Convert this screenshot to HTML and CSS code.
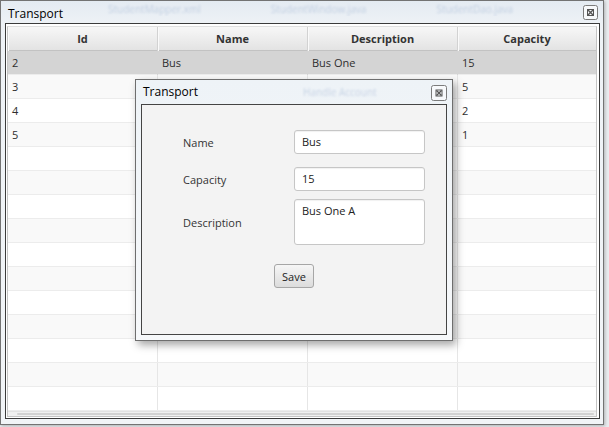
FILE: index.html
```html
<!DOCTYPE html>
<html>
<head>
<meta charset="utf-8">
<link rel="stylesheet" href="styles.css">
</head>
<body>
<div class="window">
  <div class="titlebar">
    <span class="title">Transport</span>
    <div class="ghosts">
      <span class="ghost">StudentMapper.xml</span>
      <span class="ghost">StudentWindow.java</span>
      <span class="ghost">StudentDao.java</span>
    </div>
    <span class="close">
      <svg width="15" height="15" viewBox="0 0 15 15"><rect x="0.5" y="0.5" width="14" height="14" rx="2" fill="#f7f9fb" stroke="#7b7b7b"/><rect x="4.5" y="4.5" width="6" height="6" fill="none" stroke="#555"/><path d="M5 5 L10 10 M10 5 L5 10" stroke="#555" stroke-width="1.4"/></svg>
    </span>
  </div>
  <div class="client">
    <div class="table">
      <div class="row header">
        <div class="cell">Id</div>
        <div class="cell">Name</div>
        <div class="cell">Description</div>
        <div class="cell">Capacity</div>
      </div>
      <div class="rows">
        <div class="row selected"><div class="cell">2</div><div class="cell">Bus</div><div class="cell">Bus One</div><div class="cell">15</div></div>
        <div class="row odd"><div class="cell">3</div><div class="cell"></div><div class="cell"></div><div class="cell">5</div></div>
        <div class="row"><div class="cell">4</div><div class="cell"></div><div class="cell"></div><div class="cell">2</div></div>
        <div class="row odd"><div class="cell">5</div><div class="cell"></div><div class="cell"></div><div class="cell">1</div></div>
        <div class="row"><div class="cell"></div><div class="cell"></div><div class="cell"></div><div class="cell"></div></div>
        <div class="row odd"><div class="cell"></div><div class="cell"></div><div class="cell"></div><div class="cell"></div></div>
        <div class="row"><div class="cell"></div><div class="cell"></div><div class="cell"></div><div class="cell"></div></div>
        <div class="row odd"><div class="cell"></div><div class="cell"></div><div class="cell"></div><div class="cell"></div></div>
        <div class="row"><div class="cell"></div><div class="cell"></div><div class="cell"></div><div class="cell"></div></div>
        <div class="row odd"><div class="cell"></div><div class="cell"></div><div class="cell"></div><div class="cell"></div></div>
        <div class="row"><div class="cell"></div><div class="cell"></div><div class="cell"></div><div class="cell"></div></div>
        <div class="row odd"><div class="cell"></div><div class="cell"></div><div class="cell"></div><div class="cell"></div></div>
        <div class="row"><div class="cell"></div><div class="cell"></div><div class="cell"></div><div class="cell"></div></div>
        <div class="row odd"><div class="cell"></div><div class="cell"></div><div class="cell"></div><div class="cell"></div></div>
        <div class="row"><div class="cell"></div><div class="cell"></div><div class="cell"></div><div class="cell"></div></div>
      </div>
      <div class="hscroll"><span class="thumb"></span></div>
    </div>
  </div>

  <div class="dialog">
    <div class="dtitlebar">
      <span class="title">Transport</span>
      <span class="ghost dghost">Handle Account</span>
      <span class="close">
        <svg width="16" height="16" viewBox="0 0 16 16"><rect x="0.5" y="0.5" width="15" height="15" rx="2" fill="#f7f9fb" stroke="#7b7b7b"/><rect x="5" y="5" width="6" height="6" fill="none" stroke="#555"/><path d="M5.5 5.5 L10.5 10.5 M10.5 5.5 L5.5 10.5" stroke="#555" stroke-width="1.4"/></svg>
      </span>
    </div>
    <div class="panel">
      <div class="frow r-name">
        <span class="label">Name</span>
        <div class="input">Bus</div>
      </div>
      <div class="frow r-cap">
        <span class="label">Capacity</span>
        <div class="input">15</div>
      </div>
      <div class="frow r-desc">
        <span class="label">Description</span>
        <div class="input area">Bus One A</div>
      </div>
      <div class="actions">
        <button class="btn">Save</button>
      </div>
    </div>
  </div>
</div>
</body>
</html>
```

FILE: styles.css
```css
* { box-sizing: border-box; }
html, body { margin: 0; padding: 0; }
body {
  width: 609px;
  height: 427px;
  background: #e9ecef;
  font-family: "Open Sans", "Noto Sans", sans-serif;
  font-size: 11px;
  color: #2e2e2e;
  overflow: hidden;
}
.window {
  position: relative;
  width: 604px;
  height: 425px;
  border: 1px solid #737373;
  background: linear-gradient(#e4ebf2, #eef2f6 24px, #f1f4f7);
  display: flex;
  flex-direction: column;
  box-shadow: 1px 1px 3px rgba(0,0,0,0.25);
}
.titlebar {
  height: 23px;
  display: flex;
  align-items: center;
  padding-left: 7px;
  padding-right: 5px;
}
.title {
  font-size: 12px;
  color: #000;
  line-height: 16px;
  padding-top: 3px;
}
.ghosts {
  flex: 1;
  min-width: 0;
  overflow: hidden;
  display: flex;
  align-self: flex-start;
  padding-top: 1px;
  padding-left: 45px;
  gap: 70px;
}
.ghost {
  color: rgba(60, 100, 170, 0.22);
  filter: blur(1.3px);
  font-size: 10px;
  white-space: nowrap;
}
.close { display: flex; flex-shrink: 0; margin-top: 1px; }
.client {
  flex: 1;
  margin: 0 3px 5px 4px;
  border: 1px solid #3b3b3b;
  background: #fff;
  padding: 2px 2px 1px 1px;
  display: flex;
}
.table {
  flex: 1;
  border: 1px solid #c4c4c4;
  border-top-color: #e0e0e0;
  display: flex;
  flex-direction: column;
  background: #fff;
}
.row {
  display: grid;
  grid-template-columns: 150px 150px 150px 1fr;
  height: 24px;
  border-bottom: 1px solid #ececec;
}
.cell {
  padding-left: 4px;
  line-height: 24px;
  border-right: 1px solid #e6e6e6;
  white-space: nowrap;
}
.cell:last-child { border-right: none; }
.header {
  background: linear-gradient(#f7f7f7, #e3e3e3);
  border-bottom: 1px solid #c2c2c2;
}
.header .cell {
  text-align: center;
  font-weight: bold;
  color: #333;
  padding-left: 0;
  border-right: 1px solid #d2d2d2;
  box-shadow: inset 1px 0 0 #fafafa;
}
.header .cell:last-child { border-right: none; }
.rows { flex: 1; overflow: hidden; }
.row.odd { background: #f9f9f9; }
.row.selected { background: #d4d4d4; }
.row.selected .cell { border-right-color: #d4d4d4; }
.hscroll {
  height: 5px;
  background: #f0f0f0;
  border-top: 1px solid #e2e2e2;
  padding: 1px 2px 0 9px;
}
.thumb {
  display: block;
  height: 2px;
  background: #d2d2d2;
  border-radius: 1px;
}

/* dialog */
.dialog {
  position: absolute;
  left: 134px;
  top: 78px;
  width: 318px;
  height: 262px;
  border: 1px solid #6e6e6e;
  background: linear-gradient(#eef3f7, #f6f8fa);
  display: flex;
  flex-direction: column;
  padding: 0 5px 5px 5px;
  box-shadow: 3px 4px 8px rgba(0,0,0,0.35);
}
.dtitlebar {
  height: 24px;
  display: flex;
  align-items: center;
  padding-left: 2px;
}
.dtitlebar .title { padding-top: 0; }
.dghost {
  margin-left: 105px;
  flex: 1;
}
.panel {
  flex: 1;
  border: 1px solid #444;
  background: #f3f3f3;
  display: flex;
  flex-direction: column;
  padding: 25px 0 0 41px;
}
.frow {
  display: flex;
  align-items: center;
}
.label {
  width: 111px;
  color: #333;
  font-size: 11px;
}
.input {
  width: 131px;
  height: 24px;
  border: 1px solid #c6c6c6;
  border-radius: 3px;
  background: #fff;
  padding-left: 7px;
  line-height: 22px;
  color: #222;
  box-shadow: inset 0 1px 1px rgba(0,0,0,0.06);
}
.r-cap { margin-top: 13px; }
.r-desc { margin-top: 8px; }
.input.area {
  height: 46px;
  line-height: 16px;
  padding-top: 3px;
}
.actions {
  display: flex;
  justify-content: center;
  margin-top: 19px;
  padding-right: 41px;
}
.btn {
  width: 40px;
  height: 24px;
  font-family: inherit;
  font-size: 11px;
  color: #222;
  border: 1px solid #a6a6a6;
  border-radius: 3px;
  background: linear-gradient(#f6f6f6, #dcdcdc);
  padding: 0;
}
```
